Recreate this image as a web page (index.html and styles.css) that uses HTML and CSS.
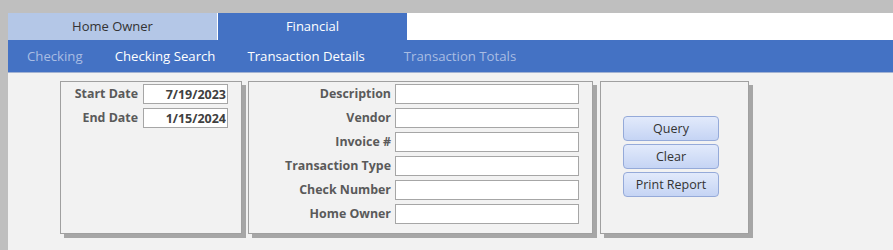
FILE: index.html
```html
<!DOCTYPE html>
<html lang="en">
<head>
  <meta charset="UTF-8" />
  <title>Checking Search</title>
  <link rel="stylesheet" href="styles.css">
</head>
<body>
  <div class="app">
    <div class="tabs">
      <div class="tab">Home Owner</div>
      <div class="tab active">Financial</div>
      <div class="tab-fill"></div>
    </div>
    <div class="subnav">
      <span class="sub-item off">Checking</span>
      <span class="sub-item">Checking Search</span>
      <span class="sub-item">Transaction Details</span>
      <span class="sub-item off last">Transaction Totals</span>
    </div>
    <div class="content">
      <div class="box box-dates">
        <label>Start Date</label>
        <input type="text" class="date" value="7/19/2023">
        <label>End Date</label>
        <input type="text" class="date" value="1/15/2024">
      </div>
      <div class="box box-filters">
        <label>Description</label>
        <input type="text">
        <label>Vendor</label>
        <input type="text">
        <label>Invoice #</label>
        <input type="text">
        <label>Transaction Type</label>
        <input type="text">
        <label>Check Number</label>
        <input type="text">
        <label>Home Owner</label>
        <input type="text">
      </div>
      <div class="box box-actions">
        <button class="btn">Query</button>
        <button class="btn">Clear</button>
        <button class="btn">Print Report</button>
      </div>
    </div>
  </div>
</body>
</html>
```

FILE: styles.css
```css
:root {
  --frame: #bfbfbf;
  --tab-light: #b4c7e7;
  --blue: #4472c4;
  --panel: #f2f2f2;
  --label: #5a5a5a;
  --line: #a0a0a0;
}

body {
  margin: 0;
  padding: 0;
  background: var(--frame);
  font-family: "Open Sans", "Noto Sans", sans-serif;
  width: 893px;
  height: 250px;
  overflow: hidden;
}

.app {
  margin: 13px 0 0 8px;
  background: var(--panel);
  height: 237px;
}

.tabs {
  display: flex;
  height: 27px;
  background: #fff;
}

.tab {
  width: 209px;
  background: var(--tab-light);
  color: #333;
  font-size: 13px;
  line-height: 27px;
  text-align: center;
  margin-right: 1px;
}

.tab.active {
  width: 189px;
  background: var(--blue);
  color: #fff;
  margin-right: 0;
}

.tab-fill {
  flex: 1;
}

.subnav {
  display: flex;
  height: 32px;
  align-items: center;
  background: var(--blue);
  border-bottom: 1px solid #a3b3d3;
  padding-left: 19px;
  gap: 32px;
  font-size: 13.2px;
  color: #fff;
}

.sub-item.off {
  color: #a9bde3;
}

.sub-item.last {
  margin-left: 7px;
}

.content {
  display: flex;
  align-items: flex-start;
  padding: 8px 0 0 52px;
}

.box {
  box-sizing: border-box;
  height: 153px;
  border: 1px solid var(--line);
  background: var(--panel);
  box-shadow: 4px 4px 0 #a6a6a6;
}

.box-dates,
.box-filters {
  display: grid;
  grid-auto-rows: 20px;
  row-gap: 4px;
  align-content: start;
  padding-top: 2px;
}

.box-dates {
  width: 182px;
  grid-template-columns: 77px 85px;
  column-gap: 5px;
  margin-right: 6px;
}

.box-filters {
  width: 345px;
  grid-template-columns: 142px 184px;
  column-gap: 4px;
  margin-right: 7px;
}

.box label {
  font-size: 12.4px;
  font-weight: bold;
  color: var(--label);
  text-align: right;
  line-height: 20px;
  white-space: nowrap;
}

.box input {
  box-sizing: border-box;
  height: 20px;
  width: 100%;
  margin: 0;
  border: 1px solid #a6a6a6;
  background: #fff;
  font-family: inherit;
  font-size: 12.5px;
  padding: 0 3px;
  outline: none;
}

.box input.date {
  text-align: right;
  font-weight: bold;
  color: #404040;
  padding-right: 1px;
}

.box-actions {
  width: 149px;
  display: flex;
  flex-direction: column;
  gap: 3px;
  padding: 34px 0 0 22px;
}

.btn {
  box-sizing: border-box;
  width: 96px;
  height: 25px;
  border: 1px solid #95aad9;
  border-radius: 4px;
  background: linear-gradient(#e2eafb, #c5d4f4);
  color: #333;
  font-family: inherit;
  font-size: 12.5px;
  padding: 0;
  cursor: pointer;
}
```
